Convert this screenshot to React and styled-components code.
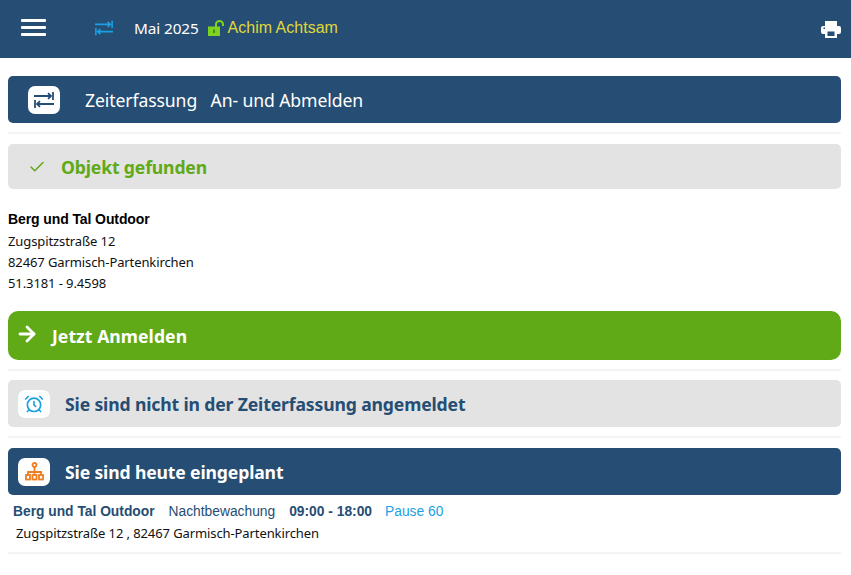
import styled, { createGlobalStyle } from 'styled-components';
import { Check, ArrowRight, AlarmClock } from 'lucide-react';

const navy = '#264d73';
const green = '#60a917';
const ui = '"Noto Sans", "Open Sans", sans-serif';
const arial = '"Liberation Sans", Arial, sans-serif';

const GlobalStyle = createGlobalStyle`
  html, body {
    margin: 0;
    padding: 0;
    background: #fff;
    font-family: ${ui};
  }
`;

const Header = styled.header`
  height: 58px;
  background: ${navy};
  display: flex;
  align-items: center;
  padding: 0 10px 3px 21px;
  box-sizing: border-box;
  color: #fff;
`;

const Burger = styled.div`
  width: 25px;
  display: flex;
  flex-direction: column;
  gap: 4px;
  margin-right: 49px;
  span {
    display: block;
    height: 3px;
    background: #fff;
    border-radius: 1px;
  }
`;

const Month = styled.span`
  font-size: 15.3px;
  margin-left: 21px;
  margin-right: 9px;
  padding-top: 1px;
  letter-spacing: -0.1px;
`;

const UserName = styled.span`
  font-family: ${arial};
  font-size: 16px;
  color: #e0d83a;
  margin-left: 3px;
`;

const PrintBtn = styled.div`
  margin-left: auto;
  display: flex;
  padding-top: 3px;
`;

const Main = styled.main`
  padding: 18px 10px 0 8px;
`;

const Bar = styled.div`
  display: flex;
  align-items: center;
  box-sizing: border-box;
  height: ${(p) => p.$h || 47}px;
  padding-left: ${(p) => p.$pl || 10}px;
  background: ${(p) => p.$bg};
  color: ${(p) => p.$color};
  border-radius: ${(p) => p.$radius || 5}px;
`;

const IconTile = styled.div`
  width: 32px;
  height: 28px;
  background: #fff;
  border-radius: 7px;
  display: flex;
  align-items: center;
  justify-content: center;
  margin-right: ${(p) => p.$gap || 15}px;
`;

const BarTitle = styled.span`
  font-size: 17.6px;
  font-weight: ${(p) => (p.$plain ? 400 : 700)};
  white-space: pre;
  letter-spacing: ${(p) => p.$ls || '-0.15px'};
`;

const Rule = styled.div`
  height: 2px;
  background: #f4f4f4;
  margin-top: ${(p) => p.$top}px;
  margin-bottom: ${(p) => p.$bottom}px;
`;

const Address = styled.div`
  margin-top: 19px;
  margin-bottom: 17px;
  font-size: 13px;
  line-height: 21px;
  color: #111;
  letter-spacing: -0.1px;
`;

const AddressName = styled.div`
  font-family: ${arial};
  font-weight: 700;
  font-size: 14px;
  line-height: 23px;
  letter-spacing: -0.1px;
  color: #000;
`;

const ShiftRow = styled.div`
  display: flex;
  align-items: baseline;
  padding: 8px 0 0 5px;
  font-family: ${arial};
  font-size: 13.8px;
  line-height: 18px;
`;

const ShiftPart = styled.span`
  font-weight: ${(p) => (p.$bold ? 700 : 400)};
  color: ${(p) => p.$color || navy};
  margin-right: ${(p) => p.$gap || 14}px;
`;

const ShiftAddress = styled.div`
  padding: 3px 0 0 8px;
  font-size: 13px;
  line-height: 18px;
  letter-spacing: -0.1px;
  color: #111;
`;

const TransferIcon = ({ width, height, color }) => (
  <svg width={width} height={height} viewBox="0 0 20 16" fill="none" stroke={color} strokeWidth="1.8">
    <path d="M0 4h17M14 1.200 17 4l-3 2.800" />
    <path d="M19 0v8" />
    <path d="M20 12H3M6 9.200 3 12l3 2.800" />
    <path d="M1 8v8" />
  </svg>
);

const OrgIcon = () => (
  <svg width="19" height="19" viewBox="0 0 19 19" fill="none" stroke="#ef7d22" strokeWidth="1.8">
    <circle cx="9.500" cy="3" r="2" />
    <path d="M9.500 5v8M3 13v-3h13v3" />
    <rect x="1" y="13" width="4" height="4.500" />
    <rect x="7.500" y="13" width="4" height="4.500" />
    <rect x="14" y="13" width="4" height="4.500" />
  </svg>
);

const LockIcon = () => (
  <svg width="17" height="16" viewBox="0 0 17 16">
    <rect x="0" y="6.500" width="12" height="9.500" fill="#7ed321" />
    <path d="M8 7V4.200a3.500 3.200 0 0 1 7 0V6" fill="none" stroke="#7ed321" strokeWidth="2" />
    <rect x="5.300" y="9.500" width="1.400" height="3.500" fill="#2f6b12" />
  </svg>
);

const PrinterIcon = () => (
  <svg width="20" height="17" viewBox="0 0 20 17">
    <rect x="4" y="0" width="12" height="6" fill="#fff" />
    <rect x="0" y="5" width="20" height="8" rx="2" fill="#fff" />
    <rect x="4" y="9" width="12" height="8" fill="#fff" />
    <rect x="6.500" y="10.500" width="7" height="4.500" fill={navy} />
    <rect x="2.500" y="6.500" width="1.500" height="1.500" fill={navy} />
  </svg>
);

const App = () => (
  <>
    <GlobalStyle />
    <Header>
      <Burger>
        <span />
        <span />
        <span />
      </Burger>
      <TransferIcon width={18} height={16} color="#1ba1e2" />
      <Month>Mai 2025</Month>
      <LockIcon />
      <UserName>Achim Achtsam</UserName>
      <PrintBtn>
        <PrinterIcon />
      </PrintBtn>
    </Header>
    <Main>
      <Bar $bg={navy} $color="#fff" $pl={20}>
        <IconTile $gap={25}>
          <TransferIcon width={20} height={16} color={navy} />
        </IconTile>
        <BarTitle $plain $ls="-0.1px">Zeiterfassung   An- und Abmelden</BarTitle>
      </Bar>
      <Rule $top={9} $bottom={10} />
      <Bar $bg="#e3e3e3" $color={green} $h={45} $pl={20}>
        <Check size={18} color={green} style={{ marginRight: 15 }} />
        <BarTitle>Objekt gefunden</BarTitle>
      </Bar>
      <Address>
        <AddressName>Berg und Tal Outdoor</AddressName>
        <div>Zugspitzstraße 12</div>
        <div>82467 Garmisch-Partenkirchen</div>
        <div>51.3181 - 9.4598</div>
      </Address>
      <Bar $bg={green} $color="#fff" $h={49} $pl={7} $radius={10}>
        <ArrowRight size={24} color="#fff" strokeWidth={2.8} style={{ marginRight: 13, marginTop: -4 }} />
        <BarTitle $ls="0.05px">Jetzt Anmelden</BarTitle>
      </Bar>
      <Rule $top={9} $bottom={9} />
      <Bar $bg="#e3e3e3" $color={navy}>
        <IconTile>
          <AlarmClock size={20} color="#1ba1e2" strokeWidth={2} />
        </IconTile>
        <BarTitle>Sie sind nicht in der Zeiterfassung angemeldet</BarTitle>
      </Bar>
      <Rule $top={9} $bottom={10} />
      <Bar $bg={navy} $color="#fff">
        <IconTile>
          <OrgIcon />
        </IconTile>
        <BarTitle>Sie sind heute eingeplant</BarTitle>
      </Bar>
      <ShiftRow>
        <ShiftPart $bold>Berg und Tal Outdoor</ShiftPart>
        <ShiftPart>Nachtbewachung</ShiftPart>
        <ShiftPart $bold $gap={13}>09:00 - 18:00</ShiftPart>
        <ShiftPart $color="#1ba1e2">Pause 60</ShiftPart>
      </ShiftRow>
      <ShiftAddress>Zugspitzstraße 12 , 82467 Garmisch-Partenkirchen</ShiftAddress>
      <Rule $top={10} $bottom={0} />
    </Main>
  </>
);

export default App;
